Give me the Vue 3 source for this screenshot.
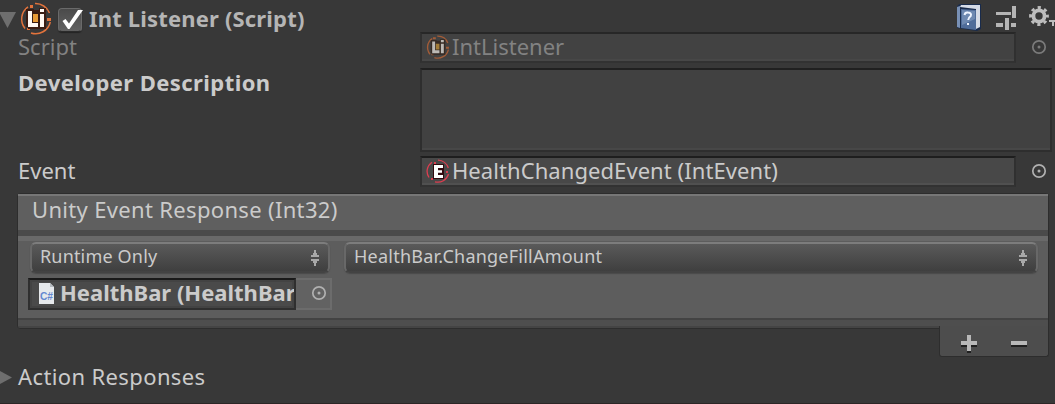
<script setup>
const selects = [
  { label: 'Runtime Only', kind: 't-run' },
  { label: 'HealthBar.ChangeFillAmount', kind: 't-fill' },
]
</script>

<template>
  <div class="inspector">
    <header class="head">
      <svg class="fold" width="16" height="16" viewBox="0 0 16 16"><path d="M-1 0H16L7.5 16Z" fill="#6e6e6e" /></svg>
      <svg class="badge" width="32" height="33" viewBox="0 0 32 33">
        <g fill="none" stroke="#e2733c" stroke-width="1.5">
          <path d="M8 4.8A15 15 0 0 0 5 26.5" /><path d="M15 1.6A15 15 0 0 1 29.5 11" /><path d="M30.3 20A15 15 0 0 1 11 31" />
        </g>
        <path d="M10 3h3v3h-3zM27 16h4v3h-4zM7 26h3v2h-3z" fill="#e2733c" />
        <path d="M6 7h8v1h5V6h7v21H8V25H6z" fill="#3a1c12" />
        <path d="M13 12h5v8h-5z" fill="#e79a35" />
        <path d="M8 9h4v12h6v4H8zM20 12h4v13h-4zM20 7h4v3h-4z" fill="#fff8f2" />
      </svg>
      <span class="check">
        <svg width="28" height="26" viewBox="0 0 28 26"><path d="M4.5 13L7.5 11L11 15.5L20 2H25L11.5 21H10Z" fill="#fff" /></svg>
      </span>
      <strong class="title">Int Listener (Script)</strong>
      <div class="tools">
        <svg width="27" height="28" viewBox="0 0 27 28">
          <path d="M2 2L4 1H25V26L21 28L1 25V4Z" fill="#192b4b" />
          <path d="M5 2H24V24L20 26V6L4 4Z" fill="#d5dbe6" />
          <path d="M1 4L4 3V25L1 24Z" fill="#7890b5" />
          <path d="M5 6L20 7V27L5 25Z" fill="#4f6c99" />
          <path d="M6 7L19 8V16L6 22Z" fill="#7f99bf" opacity=".65" />
          <path d="M8.5 12Q9 9 12 9.5Q16 10 14.7 13Q12.5 14.5 12.2 17M12 20V22" fill="none" stroke="#eef4ff" stroke-width="2" />
        </svg>
        <svg width="20" height="24" viewBox="0 0 20 24" fill="#b5b5b5">
          <path d="M0 6h15v3H0zM16 0h4v12h-4zM0 17h7v4H0zM9 12h4v12H9zM15 17h5v4h-5z" />
        </svg>
        <svg width="26" height="24" viewBox="0 0 26 24">
          <circle cx="10" cy="10" r="5.6" fill="none" stroke="#bdbdbd" stroke-width="3.8" />
          <circle cx="10" cy="10" r="8.4" fill="none" stroke="#bdbdbd" stroke-width="3" stroke-dasharray="3.2 3.397" stroke-dashoffset="1.6" />
          <path d="M20 14H27V16H25V20H23V16H20Z" fill="#bdbdbd" />
        </svg>
      </div>
    </header>

    <div class="row script">
      <label>Script</label>
      <div class="field">
        <svg class="mini" width="24" height="24" viewBox="0 0 32 33">
          <g fill="none" stroke="#a25c38" stroke-width="1.9">
            <path d="M8 4.8A15 15 0 0 0 5 26.5" /><path d="M15 1.6A15 15 0 0 1 29.5 11" /><path d="M30.3 20A15 15 0 0 1 11 31" />
          </g>
          <path d="M9 3h4v3h-4zM27 16h4v3h-4zM7 26h3v2h-3z" fill="#a25c38" />
          <path d="M6 7h8v1h5V6h7v21H8V25H6z" fill="#352a24" />
          <path d="M13 12h5v8h-5z" fill="#a17b38" />
          <path d="M8 9h4v12h6v4H8zM20 12h4v13h-4zM20 7h4v3h-4z" fill="#bcb9b5" />
        </svg>
        <span>IntListener</span>
      </div>
      <svg class="pick" width="16" height="16" viewBox="0 0 16 16"><circle cx="8" cy="8" r="6.2" /><circle class="dot" cx="8" cy="8" r="1.5" /></svg>
    </div>

    <div class="row desc">
      <label><strong class="t-desc">Developer Description</strong></label>
      <div class="area"></div>
    </div>

    <div class="row event">
      <label>Event</label>
      <div class="field">
        <svg class="mini" width="24" height="24" viewBox="0 0 24 24">
          <g fill="none" stroke="#dc3e50" stroke-width="1.3">
            <path d="M6 3.2A11 11 0 0 0 3 18.5" /><path d="M12 1.2A11 11 0 0 1 22.3 9" /><path d="M22.5 15A11 11 0 0 1 9 22.8" />
          </g>
          <path d="M8 3h2v2H8zM20 12h2v2h-2zM5 19h2v2H5z" fill="#dc3e50" />
          <path d="M7 5h11v15H7z" fill="#32090e" />
          <path d="M8 6h9v3h-5v2.3h4v2.5h-4V16h5v3H8z" fill="#fff" />
        </svg>
        <span class="t-health">HealthChangedEvent (IntEvent)</span>
      </div>
      <svg class="pick" width="16" height="16" viewBox="0 0 16 16"><circle cx="8" cy="8" r="6.2" /><circle class="dot" cx="8" cy="8" r="1.5" /></svg>
    </div>

    <section class="response">
      <div class="caption">Unity Event Response (Int32)</div>
      <div class="listing">
        <div class="selects">
          <div v-for="s in selects" :key="s.kind" class="select">
            <span :class="s.kind">{{ s.label }}</span>
            <svg width="10" height="18" viewBox="0 0 10 18" fill="#a8a8a8"><path d="M4 1h2v3h1v2h2v2H1V6h2V4h1zM1 10h8v2H7v2H6v3H4v-3H3v-2H1z" /></svg>
          </div>
        </div>
        <div class="target">
          <div class="object">
            <svg width="15" height="21" viewBox="0 0 15 21">
              <path d="M0 0H11L15 4V21H0Z" fill="#e6e9ec" /><path d="M11 0L15 4H11Z" fill="#b5babf" />
              <text x="1" y="16.5" textLength="13" lengthAdjust="spacingAndGlyphs">C#</text>
            </svg>
            <strong>HealthBar (HealthBar</strong>
          </div>
          <div class="target-pick">
            <svg class="pick" width="16" height="16" viewBox="0 0 16 16"><circle cx="8" cy="8" r="6.2" /><circle class="dot" cx="8" cy="8" r="1.5" /></svg>
          </div>
        </div>
      </div>
    </section>
    <div class="buttons">
      <svg width="16" height="18" viewBox="0 0 16 18"><path d="M0 8h16v4H0zM6 2h4v16H6z" fill="#202020" /><path d="M0 6h6V0h4v6h6v4h-6v6H6v-6H0z" fill="#b8b8b8" /></svg>
      <svg width="16" height="18" viewBox="0 0 16 18"><path d="M0 8h16v4H0z" fill="#202020" /><path d="M0 6h16v4H0z" fill="#b8b8b8" /></svg>
    </div>

    <div class="actions">
      <svg width="12" height="16" viewBox="0 0 12 16"><path d="M0 1L12 7.5L0 14Z" fill="#6e6e6e" /></svg>
      <span>Action Responses</span>
    </div>
  </div>
</template>

<style>
body { background: #383838; overflow: hidden; }
</style>

<style scoped>
* { box-sizing: border-box; }
svg { display: block; flex: none; }
.inspector {
  width: 1055px; height: 404px; overflow: hidden;
  background: #383838; color: #cbcbcb; border-bottom: 1px solid #2c2626;
  font: 22px/30px "Noto Sans", "Open Sans", sans-serif; white-space: nowrap;
}
.head { display: flex; height: 32px; align-items: flex-start; color: #b5b5b5; }
.fold { margin-top: 12px; }
.badge { margin: 2px 0 0 4px; }
.check {
  width: 24px; height: 24px; margin: 8px 0 0 6px; border-radius: 4px;
  background: linear-gradient(#4a4a4a, #626262); border: 1px solid #6a6a6a; border-bottom-color: #2b2b2b;
  box-shadow: 0 1px 1px #242424; flex: none;
}
.check svg { margin: -1px 0 0 -1px; }
.title { margin: 3px 0 0 7px; letter-spacing: .17px; }
.tools { display: flex; margin-left: auto; align-items: flex-start; padding-top: 3px; }
.tools svg:nth-child(2) { margin: 3px 0 0 13px; }
.tools svg:nth-child(3) { margin: 3px 0 0 13px; }
.row { display: flex; padding-left: 18px; }
.row label { width: 402px; flex: none; margin-top: -1px; }
.script { height: 36px; color: #828282; }
.script .field { background: #424242; }
.field {
  display: flex; align-items: center; width: 596px; height: 31px; padding-left: 4px;
  background: #484848; border: 2px solid #303030; border-top-color: #1e1e1e; border-bottom-color: #323232;
  box-shadow: inset 0 -2px #505050;
}
.script .field { box-shadow: inset 0 -2px #474747; border-top-color: #272727; }
.mini { margin-right: 2px; margin-bottom: 1px; }
.field span { margin-top: -3px; }
.row .pick { margin: 7px 0 0 15px; }
.pick { fill: none; stroke: #b0b0b0; stroke-width: 1.7; }
.pick .dot { fill: #b0b0b0; stroke: none; }
.script .pick { stroke: #7b7b7b; }
.script .pick .dot { fill: #7b7b7b; }
.desc { height: 88px; }
.t-desc { letter-spacing: .43px; }
.t-health { letter-spacing: .07px; }
.area { width: 632px; height: 84px; background: #414141; border: 2px solid #2e2e2e; border-top-color: #202020; box-shadow: inset 0 -2px #474747; }
.event { height: 37px; }
.response {
  width: 1032px; height: 136px; margin-left: 17px; border: 1px solid #2d2d2d;
  border-radius: 3px 3px 0 3px; background: #5d5d5d;
  box-shadow: inset 0 -2px #444;
}
.caption { height: 36px; padding-left: 14px; border-top: 2px solid #777; background: #5f5f5f; line-height: 26px; letter-spacing: .33px; }
.listing {
  height: 96px; border-top: 6px solid #4a4a4a; border-bottom: 6px solid #4e4e4e; padding: 0 10px;
  background: linear-gradient(#696969 5px, #5d5d5d 5px 82px, #434343 82px);
}
.selects { display: grid; grid-template-columns: 300px 694px; gap: 14px; padding: 6px 0 0 2px; }
.select {
  display: flex; align-items: center; justify-content: space-between; height: 31px; padding: 0 8px 1px 8px;
  border: 2px solid #686868; border-top-color: #7d7d7d; border-bottom-color: #434343; border-radius: 6px;
  background: linear-gradient(#5c5c5c, #3d3d3d); background-origin: border-box;
  box-shadow: 0 1px 1px #4a4a4a; font-size: 18px;
}
.select span { margin-top: -2px; }
.select svg { margin-top: 1px; }
.t-run { letter-spacing: .17px; }
.t-fill { letter-spacing: .23px; }
.target { display: flex; margin-top: 5px; }
.object {
  display: flex; align-items: center; width: 268px; height: 32px; padding-left: 9px; overflow: hidden;
  background: #4a4a4a; border: 2px solid #2f2f2f; border-top-color: #191919; box-shadow: inset 0 0 0 2px #434343;
}
.object svg { margin: -2px 6px 0 0; }
.object strong { margin-top: -4px; }
.object text { font: bold 11px "Liberation Sans", sans-serif; fill: #6387d0; }
.target-pick { width: 36px; height: 32px; padding: 5px 0 0 15px; background: #626262; border: 2px solid #6c6c6c; border-left: 0; }
.buttons {
  position: relative; z-index: 1; display: flex; gap: 34px; width: 110px; height: 31px; margin: -3px 0 0 939px; padding: 9px 0 0 21px;
  background: #4d4d4d; border: 1px solid #2d2d2d; border-top: 0; border-radius: 0 0 3px 3px;
}
.actions { display: flex; margin-top: 4px; letter-spacing: .38px; }
.actions svg { margin: 9px 6px 0 0; }
</style>
